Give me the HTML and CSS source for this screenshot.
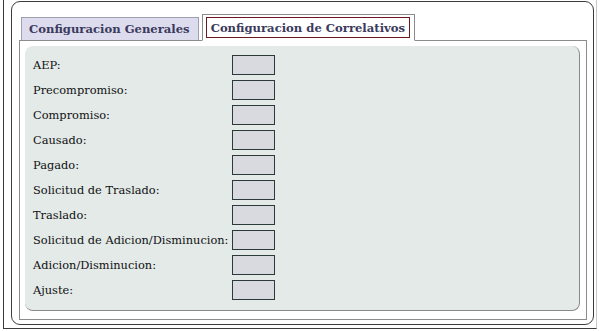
FILE: index.html
```html
<!DOCTYPE html>
<html>
<head>
<meta charset="utf-8">
<link rel="stylesheet" href="styles.css">
</head>
<body>
<div class="frame">
  <div class="box">
    <div class="tabs">
      <ul class="nav">
        <li class="tab">Configuracion Generales</li>
        <li class="tab active"><span class="focus">Configuracion de Correlativos</span></li>
      </ul>
      <div class="panel">
        <div class="inner">
          <div class="row"><span class="lbl">AEP:</span><span class="inp"></span></div>
          <div class="row"><span class="lbl">Precompromiso:</span><span class="inp"></span></div>
          <div class="row"><span class="lbl">Compromiso:</span><span class="inp"></span></div>
          <div class="row"><span class="lbl">Causado:</span><span class="inp"></span></div>
          <div class="row"><span class="lbl">Pagado:</span><span class="inp"></span></div>
          <div class="row"><span class="lbl">Solicitud de Traslado:</span><span class="inp"></span></div>
          <div class="row"><span class="lbl">Traslado:</span><span class="inp"></span></div>
          <div class="row"><span class="lbl">Solicitud de Adicion/Disminucion:</span><span class="inp"></span></div>
          <div class="row"><span class="lbl">Adicion/Disminucion:</span><span class="inp"></span></div>
          <div class="row"><span class="lbl">Ajuste:</span><span class="inp"></span></div>
        </div>
      </div>
    </div>
  </div>
</div>
</body>
</html>
```
FILE: styles.css
```css
html, body {
  margin: 0;
  padding: 0;
  background: #fff;
}
body {
  font-family: "DejaVu Serif", serif;
  width: 604px;
  height: 331px;
  overflow: hidden;
}
.frame {
  margin-left: 3px;
  width: 594px;
  height: 329px;
  border-left: 1px solid #3a3a3a;
  border-right: 1px solid #c8c8c8;
  border-bottom: 1px solid #3a3a3a;
  box-sizing: border-box;
  padding: 1px 0 0 7px;
}
.box {
  width: 583px;
  height: 324px;
  box-sizing: border-box;
  border: 1px solid #3c3c3c;
  border-radius: 9px;
  padding: 15px 6px 5px 7px;
}
.tabs {
  height: 303px;
  box-sizing: border-box;
  display: flex;
  flex-direction: column;
}
.nav {
  list-style: none;
  margin: 0;
  padding: 0;
  display: flex;
  align-items: flex-end;
  gap: 3px;
  border-bottom: 1px solid #8c8c8c;
  position: relative;
  z-index: 1;
  height: 24px;
  box-sizing: border-box;
}
.tab {
  font-weight: bold;
  font-size: 11.6px;
  color: #3b3a5c;
  margin-left: 2px;
  padding: 3px 8px 3px 7px;
  background: #dcdcee;
  border: 1px solid #a0a0b0;
  border-bottom: none;
  line-height: 16px;
  margin-bottom: 0;
}
.tab.active {
  background: #fff;
  margin-left: 0;
  padding: 2px 4px 2px 3px;
  margin-bottom: -1px;
  border-color: #8c8c8c;
  border-bottom: 1px solid #fff;
}
.focus {
  display: block;
  border: 1px solid #6b1a22;
  padding: 2px 4px 1px 4px;
  line-height: 16px;
}
.panel {
  flex: 1;
  border: 1px solid #8c8c8c;
  border-top: none;
  padding: 5px 6px 8px 5px;
}
.inner {
  height: 100%;
  box-sizing: border-box;
  background: #e3eae8;
  border-radius: 8px;
  border-right: 1px solid #8a8a8a;
  border-bottom: 1px solid #8a8a8a;
  padding: 9px 8px 8px 8px;
  display: flex;
  flex-direction: column;
  gap: 5px;
}
.row {
  display: flex;
  align-items: center;
  height: 20px;
}
.lbl {
  width: 199px;
  font-size: 11.4px;
  color: #111;
}
.inp {
  width: 43px;
  height: 20px;
  box-sizing: border-box;
  border: 1px solid #2d3a3a;
  background: #d8dadf;
}
```
